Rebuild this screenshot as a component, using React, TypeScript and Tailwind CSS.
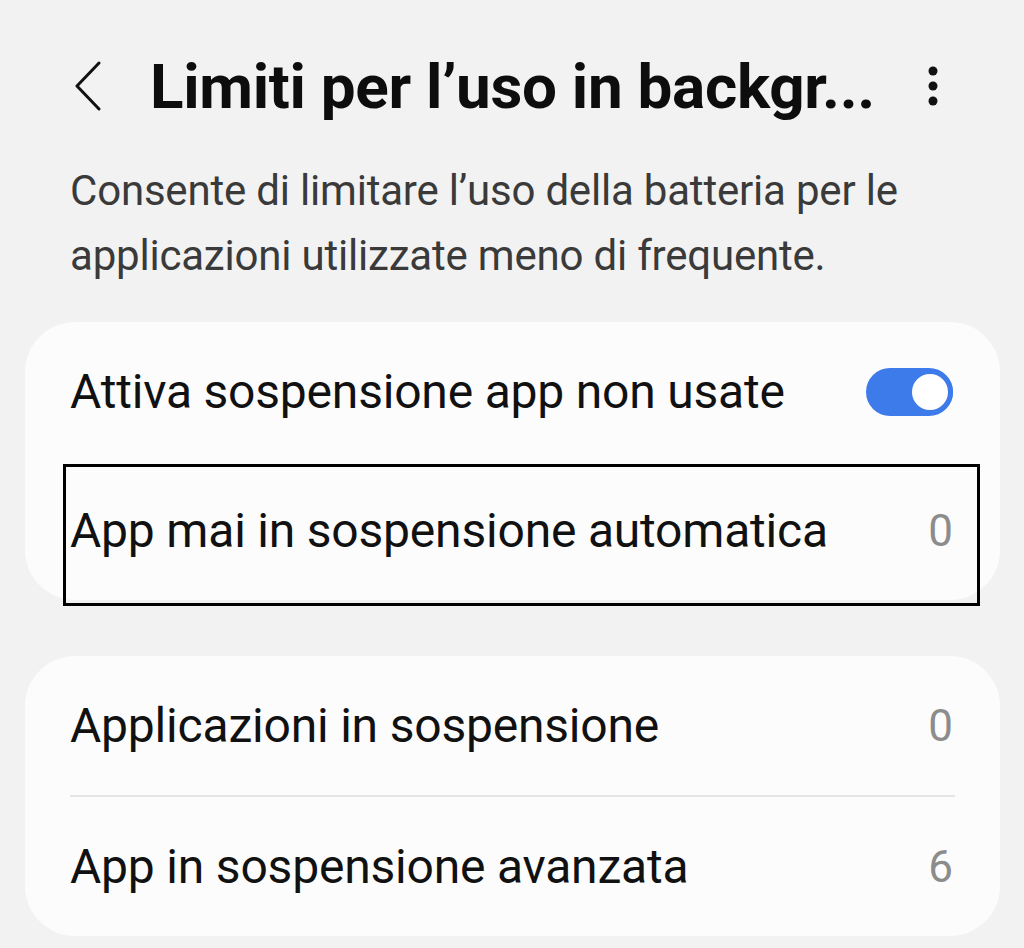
import { useState } from "react";

const font = { fontFamily: "Roboto, 'Noto Sans', sans-serif" };

function Toggle({ on, onChange }: { on: boolean; onChange: () => void }) {
  return (
    <button
      onClick={onChange}
      className={`relative flex items-center w-[87px] h-[48px] rounded-full ${on ? "bg-[#3e7bea] justify-end" : "bg-[#c9c9c9] justify-start"}`}
    >
      <span
        className={`w-[46px] h-[46px] rounded-full bg-white border-[5px] ${on ? "border-[#3e7bea]" : "border-[#c9c9c9]"}`}
      />
    </button>
  );
}

function Row({ label, value, children }: { label: string; value?: string; children?: React.ReactNode }) {
  return (
    <div className="flex items-center justify-between h-[139px] pl-[45px] pr-[47px]">
      <span className="text-[48px] text-[#111] tracking-[-0.2px]">{label}</span>
      {value !== undefined && <span className="text-[44px] text-[#8c8c8c]">{value}</span>}
      {children}
    </div>
  );
}

export default function App() {
  const [sleepOn, setSleepOn] = useState(true);

  return (
    <div className="w-[1024px] h-[948px] bg-[#f2f2f2] overflow-hidden" style={font}>
      {/* header */}
      <div className="flex items-center h-[100px] mt-[36px] pl-[74px] pr-[86px]">
        <svg width="28" height="50" viewBox="0 0 28 50" fill="none" className="shrink-0">
          <path d="M25 2 L3 25 L25 48" stroke="#111" strokeWidth="3" strokeLinecap="round" strokeLinejoin="round" />
        </svg>
        <h1 className="ml-[48px] flex-1 text-[62px] font-bold text-[#0d0d0d] tracking-[-0.3px] whitespace-nowrap">
          Limiti per l’uso in backgr...
        </h1>
        <svg width="10" height="40" viewBox="0 0 10 40" className="shrink-0">
          <circle cx="5" cy="5" r="4.5" fill="#111" />
          <circle cx="5" cy="20" r="4.5" fill="#111" />
          <circle cx="5" cy="35" r="4.5" fill="#111" />
        </svg>
      </div>

      {/* description */}
      <p className="mt-[22px] px-[70px] text-[42px] leading-[65px] text-[#3a3a3a] tracking-[-0.2px]">
        Consente di limitare l’uso della batteria per le applicazioni utilizzate meno di frequente.
      </p>

      {/* first card */}
      <div className="mt-[34px] ml-[25px] mr-[24px] bg-[#fcfcfc] rounded-[50px]">
        <Row label="Attiva sospensione app non usate">
          <Toggle on={sleepOn} onChange={() => setSleepOn(!sleepOn)} />
        </Row>
        <div className="relative">
          <Row label="App mai in sospensione automatica" value="0" />
          <div className="absolute left-[38px] right-[20px] top-[3px] bottom-[-6px] border-[3px] border-black pointer-events-none" />
        </div>
      </div>

      {/* second card */}
      <div className="mt-[56px] ml-[25px] mr-[24px] bg-[#fcfcfc] rounded-[50px]">
        <Row label="Applicazioni in sospensione" value="0" />
        <div className="ml-[45px] mr-[45px] h-[2px] bg-[#e6e6e6]" />
        <Row label="App in sospensione avanzata" value="6" />
      </div>
    </div>
  );
}
